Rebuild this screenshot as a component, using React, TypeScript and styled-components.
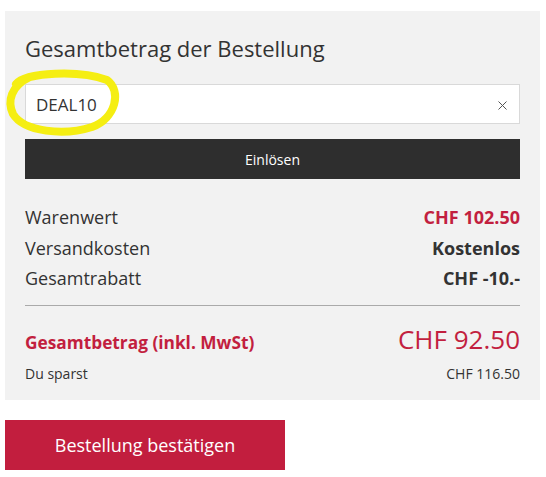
import React from "react";
import styled, { createGlobalStyle } from "styled-components";

const Global = createGlobalStyle`
  html, body { margin: 0; padding: 0; background: #ffffff; }
  body { font-family: "Open Sans", "Liberation Sans", Arial, sans-serif; color: #333333; }
  * { box-sizing: border-box; }
`;

const Page = styled.div`
  position: relative;
  width: 546px;
  padding: 11px 6px 0 5px;
`;

const Panel = styled.section`
  background: #f2f2f2;
  padding: 24px 20px 16px 20px;
  display: flex;
  flex-direction: column;
`;

const Title = styled.h2`
  margin: 0 0 23px 0;
  font-size: 22px;
  line-height: 26px;
  font-weight: 400;
  color: #333333;
`;

const InputBox = styled.div`
  height: 40px;
  background: #ffffff;
  border: 1px solid #d9d9d9;
  display: flex;
  align-items: center;
  justify-content: space-between;
  padding: 0 12px 0 10px;
`;

const CodeText = styled.span`
  font-size: 17px;
  color: #333333;
`;

const ClearIcon = styled.svg`
  width: 9px;
  height: 9px;
  display: block;
  margin-top: 3px;
`;

const DarkButton = styled.button`
  margin-top: 15px;
  height: 40px;
  border: none;
  background: #2e2e2e;
  color: #ffffff;
  font-family: inherit;
  font-size: 14px;
`;

const Rows = styled.div`
  margin-top: 23px;
  display: flex;
  flex-direction: column;
`;

const Row = styled.div`
  display: flex;
  justify-content: space-between;
  align-items: baseline;
  font-size: 18px;
  line-height: 30.5px;
`;

const Value = styled.span<{ $red?: boolean }>`
  font-weight: 700;
  color: ${(p) => (p.$red ? "#c21f3f" : "#333333")};
`;

const Divider = styled.hr`
  margin: 11px 0 0 0;
  border: none;
  border-top: 1px solid #aaaaaa;
  height: 0;
`;

const TotalRow = styled.div`
  margin-top: 15px;
  display: flex;
  justify-content: space-between;
  align-items: baseline;
  line-height: 36px;
`;

const TotalLabel = styled.span`
  font-size: 17.3px;
  font-weight: 700;
  color: #c21f3f;
`;

const TotalValue = styled.span`
  font-size: 26px;
  color: #c21f3f;
`;

const SaveRow = styled.div`
  margin-top: 3px;
  display: flex;
  justify-content: space-between;
  font-size: 14px;
  line-height: 20px;
`;

const ConfirmButton = styled.button`
  margin-top: 20px;
  width: 280px;
  height: 50px;
  border: none;
  background: #c21e3e;
  color: #ffffff;
  font-family: inherit;
  font-size: 18px;
  display: block;
`;

const Highlight = styled.svg`
  position: absolute;
  left: 0;
  top: 0;
  width: 140px;
  height: 145px;
  pointer-events: none;
`;

export default function App() {
  return (
    <>
      <Global />
      <Page>
        <Panel>
          <Title>Gesamtbetrag der Bestellung</Title>
          <InputBox>
            <CodeText>DEAL10</CodeText>
            <ClearIcon viewBox="0 0 9 9">
              <path d="M0.5 0.5 L8.5 8.5 M8.5 0.5 L0.5 8.5" stroke="#555" strokeWidth="1" />
            </ClearIcon>
          </InputBox>
          <DarkButton>Einlösen</DarkButton>
          <Rows>
            <Row>
              <span>Warenwert</span>
              <Value $red>CHF 102.50</Value>
            </Row>
            <Row>
              <span>Versandkosten</span>
              <Value>Kostenlos</Value>
            </Row>
            <Row>
              <span>Gesamtrabatt</span>
              <Value>CHF -10.-</Value>
            </Row>
          </Rows>
          <Divider />
          <TotalRow>
            <TotalLabel>Gesamtbetrag (inkl. MwSt)</TotalLabel>
            <TotalValue>CHF 92.50</TotalValue>
          </TotalRow>
          <SaveRow>
            <span>Du sparst</span>
            <span>CHF 116.50</span>
          </SaveRow>
        </Panel>
        <ConfirmButton>Bestellung bestätigen</ConfirmButton>
        <Highlight viewBox="0 0 140 145">
          <path
            d="M16 84 C26 72, 80 70, 107 80 C122 91, 116 118, 92 127 C64 136, 24 132, 13 114 C7 101, 11 86, 30 77"
            fill="none"
            stroke="#f5ee12"
            strokeWidth="8"
            strokeLinecap="round"
            strokeLinejoin="round"
          />
        </Highlight>
      </Page>
    </>
  );
}
